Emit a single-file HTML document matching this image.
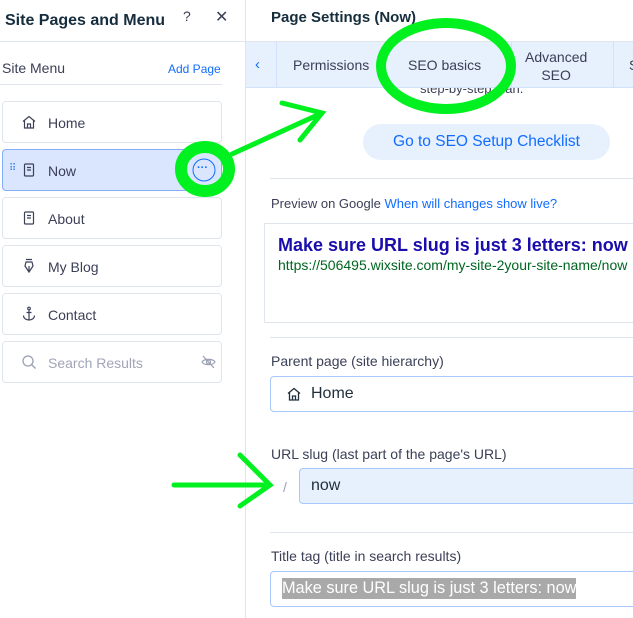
<!DOCTYPE html>
<html><head><meta charset="utf-8"><style>
*{box-sizing:border-box;margin:0;padding:0}
body{width:633px;height:618px;overflow:hidden;background:#fff;font-family:"Liberation Sans",sans-serif;color:#20303c;position:relative}
.abs{position:absolute}
.item{position:absolute;left:2px;width:220px;height:42px;border:1px solid #dfe5eb;border-radius:4px;background:#fff;font-size:14px;color:#3b4057}
.item .ic{position:absolute;left:18px;top:12px;width:16px;height:16px}
.item .t{position:absolute;left:45px;top:13px}
.lbl{position:absolute;left:271px;font-size:14px;color:#3b4057}
.hr{position:absolute;left:270px;right:0;height:1px;background:#dfe5eb}
</style></head><body>
<!-- left panel -->
<div class="abs" style="left:5px;top:12px;font-size:16px;font-weight:bold;color:#162d3d">Site Pages and Menu</div>
<div class="abs" style="left:183px;top:8px;font-size:14px;color:#3b4057">?</div>
<div class="abs" style="left:215px;top:7px;font-size:16px;color:#3b4057">✕</div>
<div class="abs" style="left:0;top:41px;width:245px;height:1px;background:#dfe5eb"></div>
<div class="abs" style="left:245px;top:0;width:1px;height:618px;background:#dfe5eb"></div>
<div class="abs" style="left:2px;top:60px;font-size:14px;color:#3b4057">Site Menu</div>
<div class="abs" style="left:168px;top:62px;font-size:12px;color:#116dff">Add Page</div>
<div class="abs" style="left:0;top:84px;width:222px;height:1px;background:#dfe5eb"></div>

<div class="item" style="top:101px"><svg class="ic" viewBox="0 0 16 16" fill="none" stroke="#3b4057" stroke-width="1.2"><path d="M2 7.5L8 2.5l6 5M3.5 6.5V14h9V6.5M6.5 14v-4h3v4"/></svg><span class="t">Home</span></div>
<div class="item" style="top:149px;background:#d9e6fd;border-color:#84aefa"><span class="abs" style="left:6px;top:13px;font-size:10px;color:#3b7cf0;letter-spacing:-1px">⠿</span><svg class="ic" viewBox="0 0 16 16" fill="none" stroke="#3b4057" stroke-width="1.2"><rect x="3.5" y="2" width="9" height="12" rx="1"/><path d="M6 5.5h4M6 8h4"/></svg><span class="t">Now</span></div>
<div class="item" style="top:197px"><svg class="ic" viewBox="0 0 16 16" fill="none" stroke="#3b4057" stroke-width="1.2"><rect x="3.5" y="2" width="9" height="12" rx="1"/><path d="M6 5.5h4M6 8h4"/></svg><span class="t">About</span></div>
<div class="item" style="top:245px"><svg class="ic" viewBox="0 0 16 16" fill="none" stroke="#3b4057" stroke-width="1.2"><path d="M5 1.5h6M5 4h6l1 4-4 6-4-6zM8 8v6"/></svg><span class="t">My Blog</span></div>
<div class="item" style="top:293px"><svg class="ic" viewBox="0 0 16 16" fill="none" stroke="#3b4057" stroke-width="1.2"><circle cx="8" cy="2.5" r="1.3"/><path d="M8 4v10M5.5 6.5h5M2.5 9.5c0 3 3 4.5 5.5 4.5s5.5-1.5 5.5-4.5"/></svg><span class="t">Contact</span></div>
<div class="item" style="top:341px;color:#a0a6b8"><svg class="ic" viewBox="0 0 16 16" fill="none" stroke="#9aa0b2" stroke-width="1.3"><circle cx="7" cy="7" r="5"/><path d="M10.5 10.5l4 4"/></svg><span class="t">Search Results</span><svg class="abs" style="left:198px;top:13px" width="15" height="14" viewBox="0 0 15 14" fill="none" stroke="#9aa0b2" stroke-width="1.2"><path d="M1 7c2-3.5 11-3.5 13 0-2 3.5-11 3.5-13 0z"/><circle cx="7.5" cy="7" r="2"/><path d="M2 1l11 12"/></svg></div>

<!-- right panel -->
<div class="abs" style="left:271px;top:9px;font-size:15px;font-weight:bold;color:#162d3d">Page Settings (Now)</div>
<div class="abs" style="left:246px;top:41px;width:387px;height:1px;background:#dfe5eb"></div>
<div class="abs" style="left:420px;top:81px;font-size:13px;color:#3b4057">step-by-step plan.</div>
<div class="abs" style="left:246px;top:42px;width:387px;height:46px;background:#e7f0fd;border-bottom:1px solid #d3e2fb"></div>
<div class="abs" style="left:276px;top:42px;width:1px;height:46px;background:#d3e2fb"></div>
<div class="abs" style="left:511px;top:42px;width:1px;height:46px;background:#d3e2fb"></div>
<div class="abs" style="left:613px;top:42px;width:1px;height:46px;background:#d3e2fb"></div>
<div class="abs" style="left:255px;top:56px;font-size:15px;color:#116dff">‹</div>
<div class="abs" style="left:293px;top:57px;font-size:14px;color:#3b4057">Permissions</div>
<div class="abs" style="left:408px;top:57px;font-size:14px;color:#3b4057">SEO basics</div>
<div class="abs" style="left:525px;top:48px;font-size:14px;color:#3b4057;text-align:center;line-height:18px">Advanced<br>SEO</div>
<div class="abs" style="left:629px;top:57px;font-size:14px;color:#3b4057">S</div>

<div class="abs" style="left:363px;top:124px;width:247px;height:36px;border-radius:18px;background:#e7f0fd;color:#116dff;font-size:15.5px;text-align:center;line-height:36px">Go to SEO Setup Checklist</div>
<div class="hr" style="top:178px"></div>
<div class="lbl" style="top:196px;font-size:13px">Preview on Google <span style="color:#116dff">When will changes show live?</span></div>
<div class="abs" style="left:264px;top:223px;width:380px;height:100px;border:1px solid #dfe5eb"></div>
<div class="abs" style="left:278px;top:235px;font-size:18px;font-weight:bold;color:#1a0dab;white-space:nowrap">Make sure URL slug is just 3 letters: now</div>
<div class="abs" style="left:278px;top:257px;font-size:14px;color:#006621;white-space:nowrap">https://506495.wixsite.com/my-site-2your-site-name/now</div>
<div class="hr" style="top:337px"></div>
<div class="lbl" style="top:353px">Parent page (site hierarchy)</div>
<div class="abs" style="left:270px;top:376px;width:370px;height:36px;border:1px solid #a8c7fa;border-radius:4px"></div>
<svg class="abs" style="left:286px;top:386px" width="16" height="16" viewBox="0 0 16 16" fill="none" stroke="#20303c" stroke-width="1.3"><path d="M2 7.5L8 2.5l6 5M3.5 6.5V14h9V6.5M6.5 14v-4h3v4"/></svg>
<div class="abs" style="left:311px;top:385px;font-size:16px;color:#20303c">Home</div>
<div class="lbl" style="top:446px">URL slug (last part of the page's URL)</div>
<div class="abs" style="left:283px;top:479px;font-size:14px;color:#9aa0b2">/</div>
<div class="abs" style="left:299px;top:468px;width:340px;height:36px;border:1px solid #a8c7fa;border-radius:4px;background:#e7f0fd"></div>
<div class="abs" style="left:311px;top:477px;font-size:16px;color:#20303c">now</div>
<div class="hr" style="top:532px"></div>
<div class="lbl" style="top:548px">Title tag (title in search results)</div>
<div class="abs" style="left:270px;top:571px;width:370px;height:36px;border:1px solid #a8c7fa;border-radius:4px"></div>
<div class="abs" style="left:282px;top:578px;font-size:16.3px;color:#fff;background:#a9a9a9;line-height:21px;white-space:nowrap">Make sure URL slug is just 3 letters: now</div>

<!-- annotations -->
<svg class="abs" style="left:0;top:0" width="633" height="618" fill="none" stroke="#00f020" stroke-linecap="round">
<ellipse cx="205" cy="169" rx="24" ry="22" stroke-width="12"/>
<circle cx="204" cy="170" r="11" fill="#d9e6fd" stroke="#116dff" stroke-width="1"/>
<path d="M232 154L322 113M282 103L322 113 300 140" stroke-width="5"/>
<ellipse cx="446" cy="66" rx="65" ry="43" stroke-width="10"/>
<path d="M174 485H270M240 455L270 485 240 506" stroke-width="5"/>
</svg>
<div class="abs" style="left:197px;top:162px;font-size:11px;color:#116dff;font-weight:bold">···</div>
</body></html>
